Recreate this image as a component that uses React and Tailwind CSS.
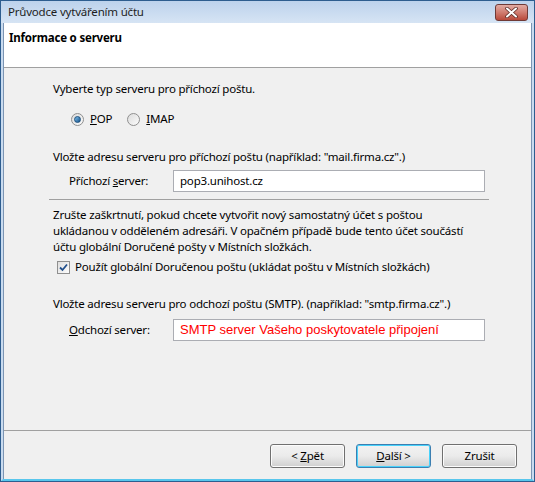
import React from "react";

const uiFont = "font-['Noto_Sans','Open_Sans',sans-serif]";

// Win Vista style radio
const Radio = ({ checked }) => (
  <span className="relative flex h-[13px] w-[13px] items-center justify-center rounded-full border border-[#8f8f8f] bg-gradient-to-br from-[#dcdcdc] to-[#fbfbfb]">
    {checked && (
      <span className="h-[7px] w-[7px] rounded-full border border-[#1c4f7c] bg-gradient-to-br from-[#7fc1ee] to-[#135289]" />
    )}
  </span>
);

const Checkbox = ({ checked }) => (
  <span className="flex h-[13px] w-[13px] items-center justify-center border border-[#8f8f8f] bg-gradient-to-br from-[#dedede] to-[#fdfdfd]">
    {checked && (
      <svg width="9" height="9" viewBox="0 0 9 9">
        <path d="M1 4.5 L3.5 7 L8 1.5" fill="none" stroke="#214f8c" strokeWidth="1.8" />
      </svg>
    )}
  </span>
);

const Button = ({ children, focused }) => (
  <button
    className={
      "h-[24px] w-[75px] rounded-[3px] border text-black bg-gradient-to-b from-[#f2f2f2] via-[#ebebeb] to-[#cfcfcf] " +
      (focused
        ? "border-[#3c7fb1] shadow-[inset_0_0_0_1px_#48d2fb]"
        : "border-[#707070] shadow-[inset_0_0_0_1px_#fcfcfc]")
    }
  >
    {children}
  </button>
);

const Field = ({ label, children }) => (
  <div className="flex h-[22px] items-center pl-[16px]">
    <span className="w-[104px]">{label}</span>
    <div className="flex h-[22px] w-[312px] items-center border border-[#abadb3] bg-white px-[6px]">
      {children}
    </div>
  </div>
);

export default function App() {
  return (
    <div
      className={
        "flex h-[482px] w-[535px] flex-col bg-[#2d5d8f] p-px text-[11.5px] tracking-[-0.2px] text-black " + uiFont
      }
    >
      {/* title bar */}
      <div className="flex h-[22px] items-center justify-between bg-gradient-to-b from-[#bcd2ec] to-[#d6e4f4] pl-[7px] pr-[6px]">
        <span className="text-[#1e1e1e]">Průvodce vytvářením účtu</span>
        <div className="mt-[1px] flex h-[17px] w-[33px] items-center justify-center rounded-[3px] border border-[#6f3a36] bg-gradient-to-b from-[#e2aba3] via-[#d07c70] to-[#b8483a]">
          <svg width="13" height="11" viewBox="0 0 13 11">
            <path d="M2 1.5 L11 9.5 M11 1.5 L2 9.5" stroke="#5b2a25" strokeWidth="3.6" strokeLinecap="round" />
            <path d="M2 1.5 L11 9.5 M11 1.5 L2 9.5" stroke="#ffffff" strokeWidth="2" strokeLinecap="round" />
          </svg>
        </div>
      </div>

      <div className="flex flex-1 flex-col border-x-2 border-b-2 border-x-[#c9dbef] border-b-[#58c6ec] bg-[#f0f0f0]">
        <div className="flex flex-1 flex-col border-l border-r border-[#7b94b3]">
          {/* header */}
          <div className="h-[45px] border-b border-[#a0a0a0] bg-white pl-[5px] pt-[6px]">
            <span className="font-bold">Informace o serveru</span>
          </div>

          {/* body */}
          <div className="flex flex-1 flex-col pl-[49px] leading-[16px]">
            <p className="mt-[13px]">Vyberte typ serveru pro příchozí poštu.</p>

            <div className="mt-[14px] flex h-[16px] items-center pl-[18px]">
              <Radio checked />
              <span className="ml-[6px]">
                <u>P</u>OP
              </span>
              <span className="ml-[15px]">
                <Radio />
              </span>
              <span className="ml-[6px]">
                <u>I</u>MAP
              </span>
            </div>

            <p className="mt-[22px]">Vložte adresu serveru pro příchozí poštu (například: "mail.firma.cz".)</p>

            <div className="mt-[5px]">
              <Field
                label={
                  <>
                    Příchozí <u>s</u>erver:
                  </>
                }
              >
                pop3.unihost.cz
              </Field>
            </div>

            <div className="ml-[-4px] mt-[7px] h-px w-[440px] bg-[#a0a0a0]" />

            <p className="mt-[7px]">
              Zrušte zaškrtnutí, pokud chcete vytvořit nový samostatný účet s poštou
              <br />
              ukládanou v odděleném adresáři. V opačném případě bude tento účet součástí
              <br />
              účtu globální Doručené pošty v Místních složkách.
            </p>

            <div className="mt-[4px] flex h-[16px] items-center pl-[4px]">
              <Checkbox checked />
              <span className="ml-[5px]">Použít globální Doručenou poštu (ukládat poštu v Místních složkách)</span>
            </div>

            <p className="mt-[21px]">
              Vložte adresu serveru pro odchozí poštu (SMTP). (například: "smtp.firma.cz".)
            </p>

            <div className="mt-[7px]">
              <Field
                label={
                  <>
                    <u>O</u>dchozí server:
                  </>
                }
              >
                <span className="font-['Liberation_Sans',Arial,sans-serif] text-[13px] tracking-normal text-[#ff0000]">
                  SMTP server Vašeho poskytovatele připojení
                </span>
              </Field>
            </div>
          </div>

          {/* footer */}
          <div className="flex h-[49px] justify-end gap-[11px] border-t border-[#a0a0a0] pr-[14px] pt-[13px]">
            <Button>
              &lt; <u>Z</u>pět
            </Button>
            <Button focused>
              <u>D</u>alší &gt;
            </Button>
            <Button>Zrušit</Button>
          </div>
        </div>
      </div>
    </div>
  );
}
